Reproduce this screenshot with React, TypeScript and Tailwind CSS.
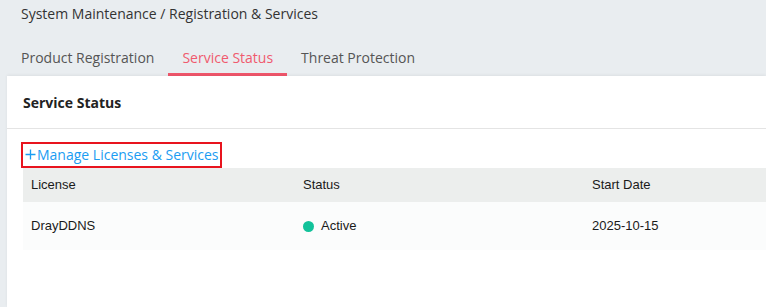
const tabs = ["Product Registration", "Service Status", "Threat Protection"];

export default function App() {
  const active = "Service Status";
  return (
    <div className="w-[766px] h-[307px] overflow-hidden bg-[#e9edf0] flex flex-col font-['Open_Sans',sans-serif]">
      <div className="h-[28px] pl-[21px] text-[14px] leading-[28px] text-[#333]">
        System Maintenance / Registration &amp; Services
      </div>
      <div className="flex pl-[7px] h-[48px]">
        {tabs.map((t) => (
          <div
            key={t}
            className={
              t === active
                ? "px-[14px] pt-[19px] pb-[4px] text-[14px] leading-[22px] text-[#f05a6e] border-b-[3px] border-[#f0566b]"
                : "px-[14px] pt-[19px] pb-[4px] text-[14px] leading-[22px] text-[#555] border-b-[3px] border-transparent"
            }
          >
            {t}
          </div>
        ))}
      </div>
      <div className="ml-[7px] flex-1 bg-white shadow-[0_-1px_3px_rgba(0,0,0,0.06)]">
        <div className="h-[53px] pl-[16px] pt-[1px] flex items-center border-b border-[#e4e4e4]">
          <span className="text-[14px] font-bold text-[#222]">Service Status</span>
        </div>
        <div className="pl-[16px] pt-[13px]">
          <div className="-ml-[2px] inline-flex items-center whitespace-nowrap h-[26px] w-[201px] border-2 border-[#e8141e] pl-[2px] text-[14px] text-[#1a9cf2] leading-none">
            <svg width="11" height="11" viewBox="0 0 11 11" className="mr-[1px] -mt-[1px]">
              <path d="M5.5 0.5v10M0.5 5.5h10" stroke="#1a9cf2" strokeWidth="1.3" fill="none" />
            </svg>
            Manage Licenses &amp; Services
          </div>
          <div className="font-['Liberation_Sans',Arial,sans-serif] text-[13px] text-[#1a1a1a]">
            <div className="flex h-[34px] items-center bg-[#eceeed]">
              <div className="w-[272px] pl-[8px]">License</div>
              <div className="w-[289px] pl-[8px]">Status</div>
              <div className="flex-1 pl-[8px]">Start Date</div>
            </div>
            <div className="flex h-[48px] items-center bg-[#fbfcfc]">
              <div className="w-[272px] pl-[8px]">DrayDDNS</div>
              <div className="w-[289px] pl-[8px] flex items-center gap-[7px]">
                <span className="w-[11px] h-[11px] rounded-full bg-[#12c29a]" />
                Active
              </div>
              <div className="flex-1 pl-[8px]">2025-10-15</div>
            </div>
          </div>
        </div>
      </div>
    </div>
  );
}
